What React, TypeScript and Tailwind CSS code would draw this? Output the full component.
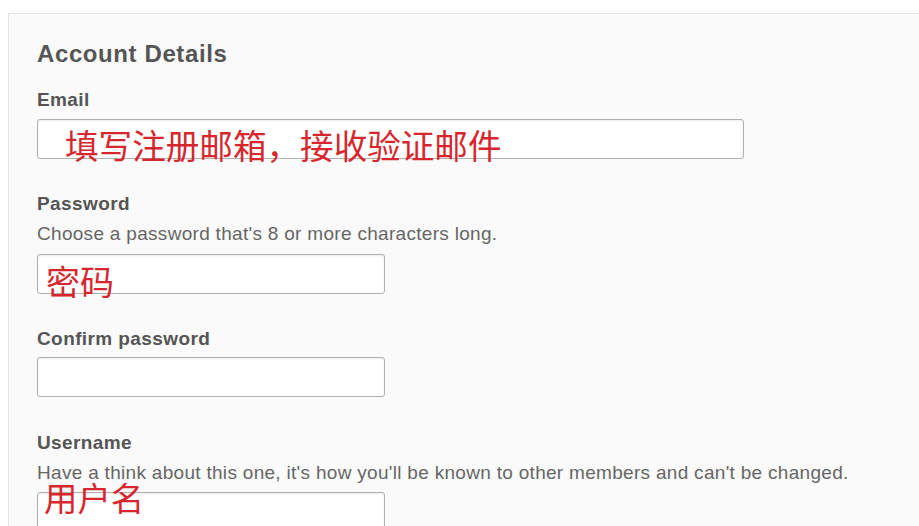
const sans = { fontFamily: '"Liberation Sans", Arial, sans-serif' }

function Note({ text, className }: { text: string; className: string }) {
  return (
    <span
      className={`absolute whitespace-nowrap leading-none text-[#d7262d] ${className}`}
      style={{ fontFamily: '"Noto Sans CJK SC", "Noto Sans", sans-serif' }}
    >
      {text}
    </span>
  )
}

function Field({ wide, note, noteClass }: { wide?: boolean; note?: string; noteClass?: string }) {
  return (
    <div className="relative">
      <div
        className={`h-[40px] rounded-[3px] border border-[#b0b0b0] bg-white shadow-[inset_0_1px_2px_rgba(0,0,0,0.08)] ${
          wide ? 'w-[707px]' : 'w-[348px]'
        }`}
      />
      {note && <Note text={note} className={noteClass ?? ''} />}
    </div>
  )
}

function Label({ children, className }: { children: React.ReactNode; className: string }) {
  return <div className={`text-[19px] font-bold leading-[20px] tracking-[0.4px] ${className}`}>{children}</div>
}

function Hint({ children }: { children: React.ReactNode }) {
  return <p className="mt-[10px] text-[19px] leading-[20px] tracking-[0.3px] text-[#666]">{children}</p>
}

export default function App() {
  return (
    <div className="h-[526px] w-full overflow-hidden bg-white pl-[8px] pt-[13px]" style={sans}>
      <div className="h-[600px] border-l border-t border-[#e4e4e4] bg-[#fafafa] pl-[28px] pt-[25px] text-[#555]">
        <h2 className="text-[24px] font-bold leading-[30px] tracking-[0.6px]">Account Details</h2>

        <Label className="mt-[21px]">Email</Label>
        <div className="mt-[9px]">
          <Field wide note="填写注册邮箱，接收验证邮件" noteClass="left-[28px] top-[9px] text-[33.6px]" />
        </div>

        <Label className="mt-[35px]">Password</Label>
        <Hint>Choose a password that's 8 or more characters long.</Hint>
        <div className="mt-[10px]">
          <Field note="密码" noteClass="left-[9px] top-[10px] text-[34px]" />
        </div>

        <Label className="mt-[35px]">Confirm password</Label>
        <div className="mt-[8px]">
          <Field />
        </div>

        <Label className="mt-[36px]">Username</Label>
        <Hint>Have a think about this one, it's how you'll be known to other members and can't be changed.</Hint>
        <div className="mt-[9px]">
          <Field note="用户名" noteClass="left-[7px] top-[-12px] text-[33.4px]" />
        </div>
      </div>
    </div>
  )
}
